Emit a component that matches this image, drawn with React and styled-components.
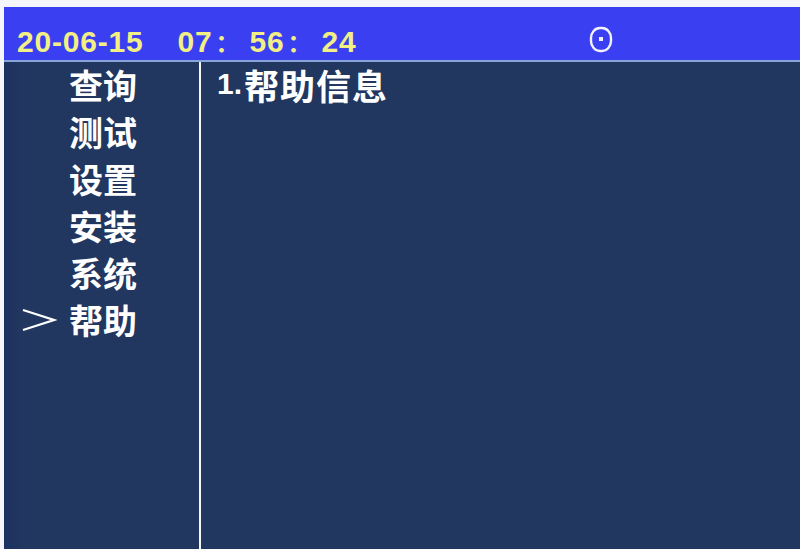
import React from 'react';
import styled, { createGlobalStyle } from 'styled-components';

const GlobalStyle = createGlobalStyle`
  html, body {
    margin: 0;
    padding: 0;
    background: #f4f6fb;
  }
  body {
    font-family: "Liberation Sans", "Noto Sans CJK SC", sans-serif;
  }
`;

// Screen frame
const Screen = styled.div`
  width: 800px;
  height: 549px;
  box-sizing: border-box;
  padding: 7px 0 0 4px;
  display: flex;
  flex-direction: column;
  overflow: hidden;
`;

const StatusBar = styled.div`
  height: 55px;
  flex: none;
  background: #3b3ff2;
  display: flex;
  align-items: flex-end;
  padding: 0 0 3px 13px;
  box-sizing: border-box;
  position: relative;
  border-bottom: 2px solid #86a6da;
`;

const Clock = styled.div`
  display: flex;
  align-items: baseline;
  color: #f2f084;
  font-weight: bold;
  font-size: 30px;
  letter-spacing: 0.8px;
  line-height: 1;
  white-space: pre;
  font-family: "Liberation Sans", "Noto Sans CJK SC", sans-serif;
`;

const Gap = styled.span`
  width: ${p => p.$w}px;
`;

const Colon = styled.span`
  width: 37px;
  padding-left: 3px;
  box-sizing: border-box;
  font-size: 24px;
  font-family: "Noto Sans CJK SC", sans-serif;
`;

const IconSlot = styled.div`
  position: absolute;
  left: 582px;
  top: 16px;
  width: 28px;
  height: 30px;
`;

const Body = styled.div`
  flex: 1;
  display: flex;
  background: #21375f;
`;

const Menu = styled.div`
  width: 195px;
  flex: none;
  display: flex;
  flex-direction: column;
  padding-top: 0;
  border-right: 2px solid #f4f6fb;
  background: linear-gradient(90deg, #1c3160 0px, #21375f 18px);
`;

const MenuItem = styled.div`
  height: 47px;
  display: flex;
  align-items: center;
  color: #ffffff;
  font-weight: bold;
  font-size: 34px;
  line-height: 1;
  font-family: "Noto Sans CJK SC", sans-serif;
  margin-top: -1px;
  margin-bottom: 1px;
`;

const Marker = styled.span`
  width: 65px;
  flex: none;
  display: flex;
  justify-content: center;
  padding-left: 4px;
  box-sizing: border-box;
  visibility: ${p => (p.$active ? 'visible' : 'hidden')};
`;

const Content = styled.div`
  flex: 1;
  padding: 0 0 0 16px;
`;

const Line = styled.div`
  height: 44px;
  display: flex;
  align-items: center;
  color: #ffffff;
  font-weight: bold;
  font-size: 35px;
  letter-spacing: 1px;
  line-height: 1;
  font-family: "Noto Sans CJK SC", sans-serif;
`;

const Num = styled.span`
  font-family: "Liberation Sans", sans-serif;
  font-size: 30px;
  letter-spacing: 0;
  margin-right: 2px;
`;

const TargetIcon = () => (
  <svg width="28" height="30" viewBox="0 0 28 30">
    <rect x="5" y="5" width="20" height="23" rx="9" ry="10" fill="none" stroke="#f2f2ff" strokeWidth="2.4" />
    <rect x="13" y="14" width="4" height="4" fill="#f2f2ff" />
  </svg>
);

const Arrow = () => (
  <svg width="36" height="26" viewBox="0 0 36 26">
    <polyline points="2,3 33,13 2,23" fill="none" stroke="#ffffff" strokeWidth="2.2" />
  </svg>
);

const items = ['查询', '测试', '设置', '安装', '系统', '帮助'];

export default function App() {
  return (
    <>
      <GlobalStyle />
      <Screen>
        <StatusBar>
          <Clock>
            <span>20-06-15</span>
            <Gap $w={34} />
            <span>07</span>
            <Colon>：</Colon>
            <span>56</span>
            <Colon>：</Colon>
            <span>24</span>
          </Clock>
          <IconSlot>
            <TargetIcon />
          </IconSlot>
        </StatusBar>
        <Body>
          <Menu>
            {items.map((label, i) => (
              <MenuItem key={label}>
                <Marker $active={i === items.length - 1}>
                  <Arrow />
                </Marker>
                {label}
              </MenuItem>
            ))}
          </Menu>
          <Content>
            <Line>
              <Num>1.</Num>帮助信息
            </Line>
          </Content>
        </Body>
      </Screen>
    </>
  );
}
